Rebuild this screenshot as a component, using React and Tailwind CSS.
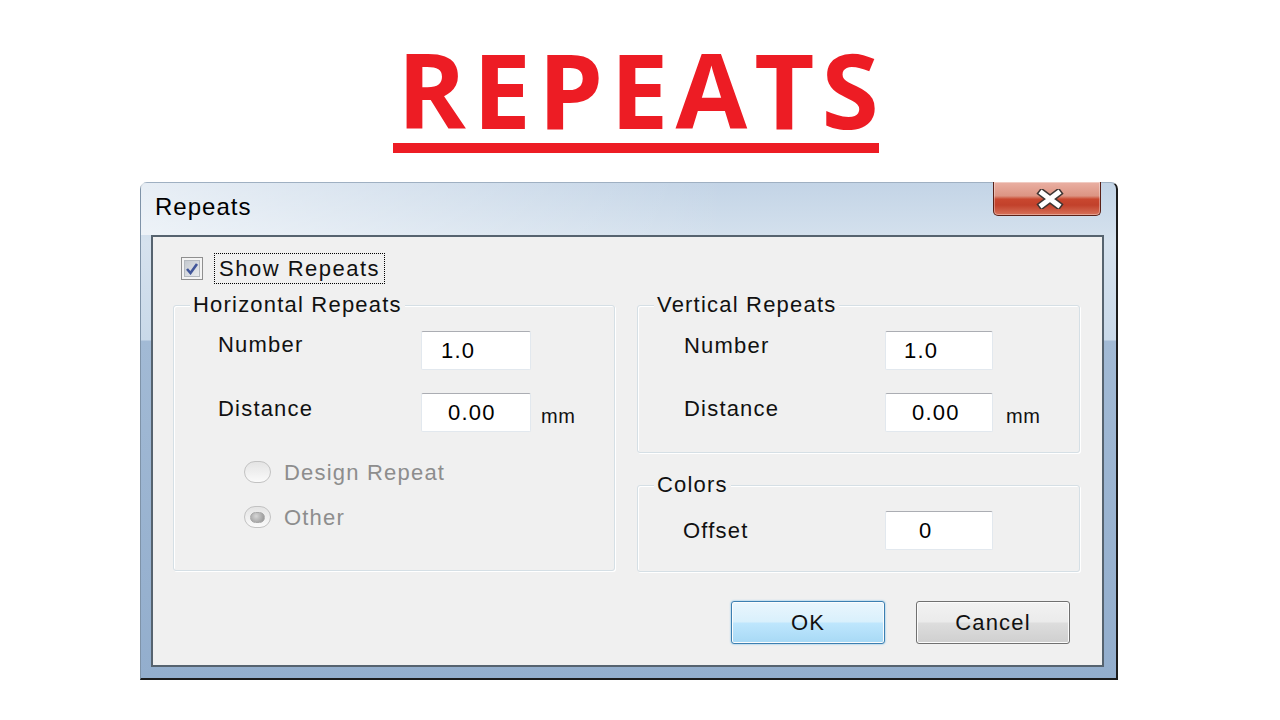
import React from 'react';

function CloseButton() {
  return (
    <div className="mt-[-1px] mr-[15px] w-[108px] h-[34px] rounded-b-[5px] border border-t-0 border-[#5a2118] bg-[linear-gradient(to_bottom,#eab0a3_0%,#dc9483_42%,#c9472f_52%,#c2412b_70%,#d7725a_100%)] shadow-[inset_0_0_0_1px_rgba(255,255,255,0.35)] flex items-center justify-center">
      <svg width="32" height="20" viewBox="0 0 32 20" className="ml-[6px]">
        <path d="M8 4 L24 16 M24 4 L8 16" stroke="#3e3432" strokeWidth="8" strokeLinecap="square" />
        <path d="M8 4 L24 16 M24 4 L8 16" stroke="#ffffff" strokeWidth="5" strokeLinecap="square" />
      </svg>
    </div>
  );
}

function Checkbox() {
  return (
    <div className="w-[22px] h-[23px] border border-[#8f8f8f] bg-[#f4f4f4] p-[2px]">
      <div className="w-full h-full bg-[linear-gradient(135deg,#c4c9cf,#e9ebee)] border border-[#b4b9bf] flex items-center justify-center">
        <svg width="14" height="13" viewBox="0 0 14 13">
          <path d="M2 7 L5.5 11 L12 2" stroke="#41569a" strokeWidth="2.6" fill="none" />
        </svg>
      </div>
    </div>
  );
}

function GroupBox({ title, className, children }) {
  return (
    <div className={`relative border border-[#d5dfe5] rounded-[3px] shadow-[inset_1px_1px_0_#ffffff,1px_1px_0_#ffffff] ${className}`}>
      <div className="absolute left-[16px] top-[-12px] px-[3px] bg-[#f0f0f0] leading-[22px] text-[#111]">
        {title}
      </div>
      {children}
    </div>
  );
}

function Field({ label, value, textPl, labelW, inputW, labelMt, unit, unitMl, center }) {
  return (
    <div className={`flex h-[39px] ${center ? 'items-center' : 'items-start'}`}>
      <div className={`${labelW} ${labelMt} leading-[22px] text-[#111]`}>{label}</div>
      <div className={`${inputW} h-[39px] bg-white border border-[#e2e8ee] border-t-[#abadb3] rounded-[2px] flex items-center leading-[22px] text-black ${textPl}`}>
        {value}
      </div>
      {unit && (
        <div className={`self-start mt-[12px] ${unitMl} text-[20px] leading-[22px] tracking-[0.5px] text-[#111]`}>
          {unit}
        </div>
      )}
    </div>
  );
}

function Radio({ label, checked }) {
  return (
    <div className="h-[30px] flex items-center">
      <div className="w-[27px] h-[22px] rounded-full border border-[#c2c2c2] bg-[linear-gradient(to_bottom,#e4e4e4,#fafafa)] flex items-center justify-center">
        {checked && (
          <div className="w-[15px] h-[11px] rounded-full border border-[#a8a8a8] bg-[radial-gradient(circle_at_40%_35%,#d6d6d6,#8e8e8e)]" />
        )}
      </div>
      <div className="ml-[13px] text-[#8d8d8d]">{label}</div>
    </div>
  );
}

export default function App() {
  return (
    <div className="w-[1280px] h-[720px] bg-white overflow-hidden font-['Liberation_Sans',Arial,sans-serif] text-[22px] tracking-[1.2px]">
      {/* Heading */}
      <div className="ml-[393px] w-[486px] pt-[37px]">
        <div className="flex justify-center pl-[11px] whitespace-nowrap font-['Open_Sans',sans-serif] font-bold text-[104px] leading-[104px] tracking-[7px] text-[#ed1c24]">
          REPEATS
        </div>
        <div className="mt-[2px] h-[10px] bg-[#ed1c24]" />
      </div>

      {/* Dialog window */}
      <div className="ml-[140px] mt-[29px] w-[978px] h-[498px] flex flex-col rounded-t-[7px] border-t border-l border-r-2 border-b-2 border-t-[#9fb0c2] border-l-[#7f93a8] border-r-[#1c1c1c] border-b-[#1c1c1c] bg-[linear-gradient(to_bottom,#c3d4e6_0px,#d6e2ee_60px,#c9d9e9_157px,#a2bad5_158px,#93aecd_100%)]">
        {/* Title bar */}
        <div className="h-[52px] flex justify-between bg-[linear-gradient(to_right,rgba(255,255,255,0.6),rgba(255,255,255,0)_60%)]">
          <div className="pl-[14px] pt-[12px] text-[24px] leading-[24px] tracking-[1px] text-black">Repeats</div>
          <CloseButton />
        </div>

        {/* Client area */}
        <div className="ml-[10px] w-[953px] h-[432px] border-2 border-[#56636f] bg-[#f0f0f0] flex flex-col">
          <div className="ml-[28px] mt-[16px] h-[31px] flex items-center">
            <Checkbox />
            <div className="ml-[11px] h-[31px] flex items-center border border-dotted border-black px-[4px] tracking-[1.5px] text-[#111]">
              Show Repeats
            </div>
          </div>

          <div className="mt-[21px] ml-[20px] flex gap-[22px] items-start">
            <GroupBox title="Horizontal Repeats" className="w-[442px] h-[266px] pt-[25px] pl-[44px]">
              <Field label="Number" value="1.0" textPl="pl-[19px]" labelW="w-[203px]" inputW="w-[110px]" labelMt="mt-[3px]" />
              <div className="mt-[23px]">
                <Field label="Distance" value="0.00" textPl="pl-[26px]" labelW="w-[203px]" inputW="w-[110px]" labelMt="mt-[5px]" unit="mm" unitMl="ml-[10px]" />
              </div>
              <div className="mt-[25px] ml-[26px] flex flex-col gap-[15px]">
                <Radio label="Design Repeat" />
                <Radio label="Other" checked />
              </div>
            </GroupBox>

            <div className="w-[443px] flex flex-col gap-[32px]">
              <GroupBox title="Vertical Repeats" className="h-[148px] pt-[25px] pl-[46px]">
                <Field label="Number" value="1.0" textPl="pl-[18px]" labelW="w-[201px]" inputW="w-[108px]" labelMt="mt-[4px]" />
                <div className="mt-[23px]">
                  <Field label="Distance" value="0.00" textPl="pl-[26px]" labelW="w-[201px]" inputW="w-[108px]" labelMt="mt-[5px]" unit="mm" unitMl="ml-[13px]" />
                </div>
              </GroupBox>
              <GroupBox title="Colors" className="h-[87px] pt-[25px] pl-[45px]">
                <Field label="Offset" value="0" textPl="pl-[33px]" labelW="w-[202px]" inputW="w-[108px]" center />
              </GroupBox>
            </div>
          </div>

          <div className="mt-[29px] pr-[32px] flex justify-end gap-[31px]">
            <button className="w-[154px] h-[43px] rounded-[3px] border border-[#3c7fb1] bg-[linear-gradient(to_bottom,#eaf6fd_0%,#d9f0fc_48%,#bee6fd_52%,#a7d9f5_100%)] shadow-[inset_0_0_0_1px_#fcfcfc,0_0_2px_#5cb3e6] text-[#111] leading-[22px]">
              OK
            </button>
            <button className="w-[154px] h-[43px] rounded-[3px] border border-[#707070] bg-[linear-gradient(to_bottom,#f2f2f2_0%,#ebebeb_48%,#dddddd_52%,#cfcfcf_100%)] shadow-[inset_0_0_0_1px_#fcfcfc] text-[#111] leading-[22px]">
              Cancel
            </button>
          </div>
        </div>
      </div>
    </div>
  );
}
